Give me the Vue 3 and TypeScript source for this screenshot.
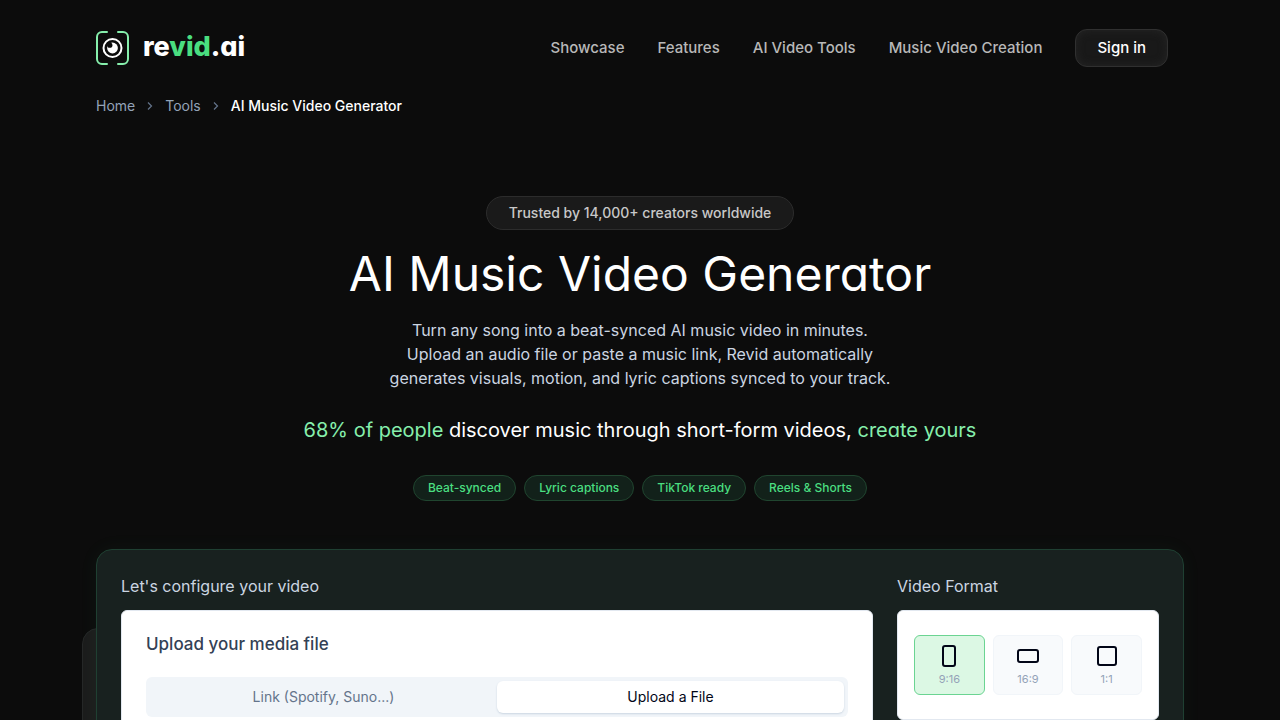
<script setup lang="ts">
import { ref } from 'vue'

interface VideoFormat {
  id: string
  label: string
  width: number
  height: number
}

const navLinks: string[] = ['Showcase', 'Features', 'AI Video Tools', 'Music Video Creation']
const features: string[] = ['Beat-synced', 'Lyric captions', 'TikTok ready', 'Reels & Shorts']
const sources: string[] = ['Link (Spotify, Suno...)', 'Upload a File']
const formats: VideoFormat[] = [
  { id: 'portrait', label: '9:16', width: 12, height: 20 },
  { id: 'landscape', label: '16:9', width: 20, height: 12 },
  { id: 'square', label: '1:1', width: 18, height: 18 },
]

const activeSource = ref<string>('Upload a File')
const activeFormat = ref<string>('portrait')
</script>

<template>
  <div class="page">
    <div class="container">
      <header class="header">
        <a class="brand" href="#" aria-label="revid.ai">
          <svg class="brand-mark" viewBox="0 0 34 34" aria-hidden="true">
            <g fill="none" stroke="#86efac" stroke-width="2" stroke-linecap="round">
              <path d="M11 1H6a5 5 0 0 0-5 5v22a5 5 0 0 0 5 5h5" />
              <path d="M22 1h5a5 5 0 0 1 5 5v22a5 5 0 0 1-5 5h-5" />
            </g>
            <circle cx="16.500" cy="17" r="9" fill="none" stroke="#fff" stroke-width="2" />
            <circle cx="16.500" cy="17" r="5.400" fill="#fff" />
            <circle cx="13.800" cy="14.200" r="2.600" fill="#0c0c0c" />
          </svg>
          <span class="brand-name">re<span class="brand-accent">vid</span>.ai</span>
        </a>
        <nav class="nav" aria-label="Main">
          <a v-for="link in navLinks" :key="link" class="nav-link" href="#">{{ link }}</a>
          <button class="sign-in" type="button">Sign in</button>
        </nav>
      </header>

      <nav class="crumbs" aria-label="Breadcrumb">
        <a href="#">Home</a>
        <svg class="chevron" viewBox="0 0 14 14" aria-hidden="true"><path d="m5 3.500 3.500 3.500L5 10.500" /></svg>
        <a href="#">Tools</a>
        <svg class="chevron" viewBox="0 0 14 14" aria-hidden="true"><path d="m5 3.500 3.500 3.500L5 10.500" /></svg>
        <span class="current" aria-current="page">AI Music Video Generator</span>
      </nav>

      <main>
        <section class="hero">
          <p class="trust">Trusted by 14,000+ creators worldwide</p>
          <h1 class="title">AI Music Video Generator</h1>
          <p class="lead">
            Turn any song into a beat-synced AI music video in minutes.<br />
            Upload an audio file or paste a music link, Revid automatically<br />
            generates visuals, motion, and lyric captions synced to your track.
          </p>
          <p class="stat"><em>68% of people</em> discover music through short-form videos, <em>create yours</em></p>
          <ul class="chips">
            <li v-for="feature in features" :key="feature" class="chip">{{ feature }}</li>
          </ul>
        </section>

        <div class="stage">
          <div class="backdrop" aria-hidden="true"></div>
          <form class="panel" @submit.prevent>
            <section class="column">
              <h2 class="column-title">Let's configure your video</h2>
              <div class="card upload">
                <h3 class="card-title">Upload your media file</h3>
                <div class="tabs" role="tablist">
                  <button
                    v-for="source in sources"
                    :key="source"
                    class="tab"
                    :class="{ active: activeSource === source }"
                    type="button"
                    role="tab"
                    :aria-selected="activeSource === source"
                    @click="activeSource = source"
                  >
                    {{ source }}
                  </button>
                </div>
              </div>
            </section>
            <section class="column">
              <h2 id="format-title" class="column-title">Video Format</h2>
              <div class="card formats" role="radiogroup" aria-labelledby="format-title">
                <label
                  v-for="format in formats"
                  :key="format.id"
                  class="format"
                  :class="{ selected: activeFormat === format.id }"
                >
                  <input v-model="activeFormat" class="format-input" type="radio" name="format" :value="format.id" />
                  <svg class="format-icon" viewBox="0 0 24 24" aria-hidden="true">
                    <rect
                      :x="12 - format.width / 2"
                      :y="12 - format.height / 2"
                      :width="format.width"
                      :height="format.height"
                      rx="2"
                    />
                  </svg>
                  <span>{{ format.label }}</span>
                </label>
              </div>
            </section>
          </form>
        </div>
      </main>
    </div>
  </div>
</template>

<style>
body {
  margin: 0;
  background: #0c0c0c;
}
</style>

<style scoped>
.page {
  min-height: 100vh;
  overflow: hidden;
  background: #0c0c0c;
  color: #fff;
  font-family: Inter, 'Liberation Sans', sans-serif;
}

.page * {
  box-sizing: border-box;
}

a {
  color: inherit;
  text-decoration: none;
}

button {
  font-family: inherit;
  cursor: pointer;
}

.container {
  max-width: 1152px;
  margin: 0 auto;
  padding: 0 32px;
}

.header {
  display: flex;
  align-items: center;
  justify-content: space-between;
  padding: 29px 16px 0 0;
}

.brand {
  display: flex;
  align-items: center;
  gap: 13px;
}

.brand-mark {
  width: 34px;
  height: 34px;
}

.brand-name {
  padding-bottom: 2px;
  font-size: 27px;
  font-weight: 800;
  font-feature-settings: 'cv11';
  line-height: 32px;
}

.brand-accent {
  color: #4ade80;
}

.nav {
  display: flex;
  align-items: center;
  gap: 33px;
}

.nav-link {
  color: #b8b8b8;
  font-size: 15px;
  font-weight: 500;
  line-height: 20px;
}

.sign-in {
  padding: 8px 21px;
  border: 1px solid #303030;
  border-radius: 12px;
  background: #191919;
  box-shadow: inset 0 0 8px #262626;
  color: #fff;
  font-size: 15px;
  font-weight: 500;
  line-height: 20px;
}

.crumbs {
  display: flex;
  align-items: center;
  gap: 8px;
  padding-top: 29px;
  color: #94a3b8;
  font-size: 14px;
  line-height: 20px;
}

.chevron {
  width: 14px;
  height: 14px;
  fill: none;
  stroke: #64748b;
  stroke-width: 1.200;
}

.current {
  color: #fff;
  font-weight: 500;
}

.hero {
  display: flex;
  flex-direction: column;
  align-items: center;
  padding-top: 80px;
  text-align: center;
}

.trust {
  margin: 0;
  padding: 6px 22px;
  border: 1px solid #2c2c2c;
  border-radius: 17px;
  background: #1a1a1a;
  color: #c8c8c8;
  font-size: 14px;
  font-weight: 500;
  line-height: 20px;
}

.title {
  margin: 16px 0;
  font-size: 48px;
  font-weight: 400;
  font-feature-settings: 'cv11';
  line-height: 56px;
}

.lead {
  margin: 0;
  color: #cbd5e1;
  font-size: 16px;
  line-height: 24px;
}

.stat {
  margin: 26px 0 31px;
  font-size: 20px;
  font-feature-settings: 'cv11';
  line-height: 28px;
}

.stat em {
  color: #86efac;
  font-style: normal;
}

.chips {
  display: flex;
  flex-wrap: wrap;
  justify-content: center;
  gap: 8px;
  margin: 0;
  padding: 0;
  list-style: none;
}

.chip {
  padding: 4px 14px;
  border: 1px solid #20452f;
  border-radius: 13px;
  background: #12211a;
  color: #4ade80;
  font-size: 12px;
  font-weight: 500;
  line-height: 16px;
}

.stage {
  position: relative;
  margin-top: 48px;
}

.backdrop {
  position: absolute;
  inset: 79px -14px 0;
  border: 1px solid #262828;
  border-radius: 16px;
  background: #1c1c1c;
  clip-path: inset(0 50% 0 0);
}

.panel {
  position: relative;
  display: grid;
  grid-template-columns: minmax(0, 1fr) 262px;
  gap: 24px;
  padding: 24px;
  border: 1px solid #1f4032;
  border-radius: 16px;
  background: #18211f;
  box-shadow: 0 0 20px rgba(74, 222, 128, 0.05);
}

.column-title {
  margin: 0 0 12px;
  color: #cbd5e1;
  font-size: 16px;
  font-weight: 400;
  line-height: 24px;
}

.card {
  border: 1px solid #e2e8f0;
  border-radius: 6px;
  background: #fff;
}

.upload {
  padding: 20px 24px 24px;
}

.card-title {
  margin: 0 0 20px;
  color: #334155;
  font-size: 17px;
  font-weight: 500;
  line-height: 26px;
}

.tabs {
  display: grid;
  grid-template-columns: 1fr 1fr;
  padding: 4px;
  border-radius: 6px;
  background: #f1f5f9;
}

.tab {
  padding: 6px 12px;
  border: 0;
  border-radius: 6px;
  background: transparent;
  color: #64748b;
  font-size: 14px;
  line-height: 20px;
}

.tab.active {
  background: #fff;
  box-shadow: 0 1px 2px #cbd5e1;
  color: #020617;
}

.formats {
  display: grid;
  grid-template-columns: repeat(3, minmax(0, 1fr));
  gap: 8px;
  padding: 24px 16px;
}

.format {
  position: relative;
  display: flex;
  flex-direction: column;
  align-items: center;
  gap: 4px;
  padding: 8px 0 7px;
  border: 1px solid #f1f5f9;
  border-radius: 6px;
  background: #f8fafc;
  color: #94a3b8;
  font-size: 11px;
  line-height: 15px;
  cursor: pointer;
}

.format.selected {
  border-color: #6bd492;
  background: #dcf8e4;
}

.format-input {
  position: absolute;
  inset: 0;
  width: 100%;
  height: 100%;
  margin: 0;
  opacity: 0;
  cursor: pointer;
}

.format-icon {
  width: 24px;
  height: 24px;
  fill: none;
  stroke: #020617;
  stroke-width: 2;
}

@media (max-width: 860px) {
  .header {
    flex-wrap: wrap;
    gap: 16px;
  }

  .nav {
    flex-wrap: wrap;
    gap: 16px;
  }

  .panel {
    grid-template-columns: minmax(0, 1fr);
  }
}
</style>
